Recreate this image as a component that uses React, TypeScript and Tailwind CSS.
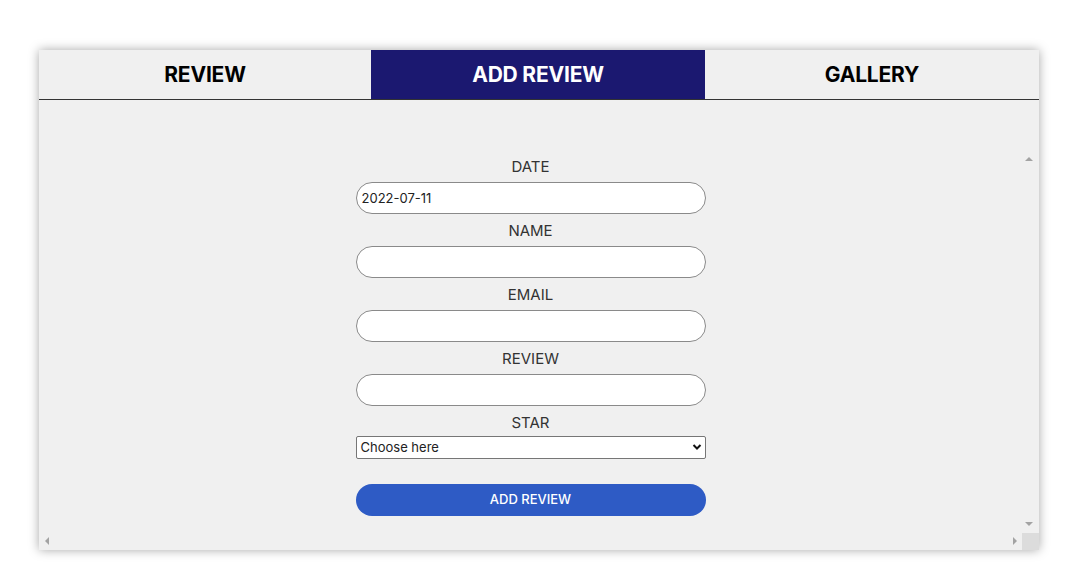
import { useState } from "react";

const tabs = ["REVIEW", "ADD REVIEW", "GALLERY"];
const fields = ["NAME", "EMAIL", "REVIEW"];

export default function App() {
  const [active, setActive] = useState(1);
  const [date, setDate] = useState("2022-07-11");

  return (
    <div className="min-h-screen bg-white pt-[50px] font-['Inter',sans-serif]">
      <div className="mx-auto w-[1000px] h-[500px] bg-[#f0f0f0] shadow-[0_0_10px_rgba(0,0,0,0.35)] flex flex-col">
        {/* Tabs */}
        <div className="grid grid-cols-[332px_334px_334px] h-[50px] border-b border-[#333]">
          {tabs.map((t, i) => (
            <button
              key={t}
              onClick={() => setActive(i)}
              className={`text-[21px] font-bold tracking-[-0.2px] ${
                active === i ? "bg-[#1b1870] text-white" : "text-black"
              }`}
            >
              {t}
            </button>
          ))}
        </div>

        {/* Form area (content width excludes the 17px scrollbar) */}
        <div className="relative flex-1">
          <div className="flex flex-col items-center pt-[55px] pr-[17px]">
            <div className="w-[350px] flex flex-col">
              <label className="text-center text-[15px] leading-[24px] text-[#333] mb-[3px]">DATE</label>
              <input
                value={date}
                onChange={(e) => setDate(e.target.value)}
                className="h-[32px] rounded-full border border-[#8a8a8a] bg-white pl-[5px] text-[13px] text-[#222] outline-none"
              />
              {fields.map((f) => (
                <div key={f} className="flex flex-col mt-[5px]">
                  <label className="text-center text-[15px] leading-[24px] text-[#333] mb-[3px]">{f}</label>
                  <input className="h-[32px] rounded-full border border-[#8a8a8a] bg-white px-[5px] text-[13px] outline-none" />
                </div>
              ))}
              <label className="mt-[5px] text-center text-[15px] leading-[24px] text-[#333] mb-[1px]">STAR</label>
              <div className="relative h-[23px] rounded-[2px] border border-[#767676] bg-white">
                <span className="absolute left-[4px] top-[2px] text-[13px] leading-[17px] text-[#222]">Choose here</span>
                <svg className="absolute right-[3px] top-[6px]" width="10" height="8" viewBox="0 0 10 8">
                  <path d="M1.5 2 L5 5.5 L8.5 2" fill="none" stroke="#111" strokeWidth="2" />
                </svg>
              </div>
              <button className="mt-[25px] h-[32px] rounded-full bg-[#2e5bc5] text-white text-[13px] font-medium">
                ADD REVIEW
              </button>
            </div>
          </div>

          {/* scrollbar arrows */}
          <div className="absolute right-[6px] top-[57px] w-0 h-0 border-l-[4px] border-r-[4px] border-b-[4px] border-l-transparent border-r-transparent border-b-[#a3a3a3]" />
          <div className="absolute right-[6px] bottom-[24px] w-0 h-0 border-l-[4px] border-r-[4px] border-t-[4px] border-l-transparent border-r-transparent border-t-[#a3a3a3]" />
          <div className="absolute left-[6px] bottom-[5px] w-0 h-0 border-t-[4px] border-b-[4px] border-r-[4px] border-t-transparent border-b-transparent border-r-[#a3a3a3]" />
          <div className="absolute right-[22px] bottom-[5px] w-0 h-0 border-t-[4px] border-b-[4px] border-l-[4px] border-t-transparent border-b-transparent border-l-[#a3a3a3]" />
          <div className="absolute right-0 bottom-0 w-[17px] h-[17px] bg-[#dcdcdc]" />
        </div>
      </div>
    </div>
  );
}
